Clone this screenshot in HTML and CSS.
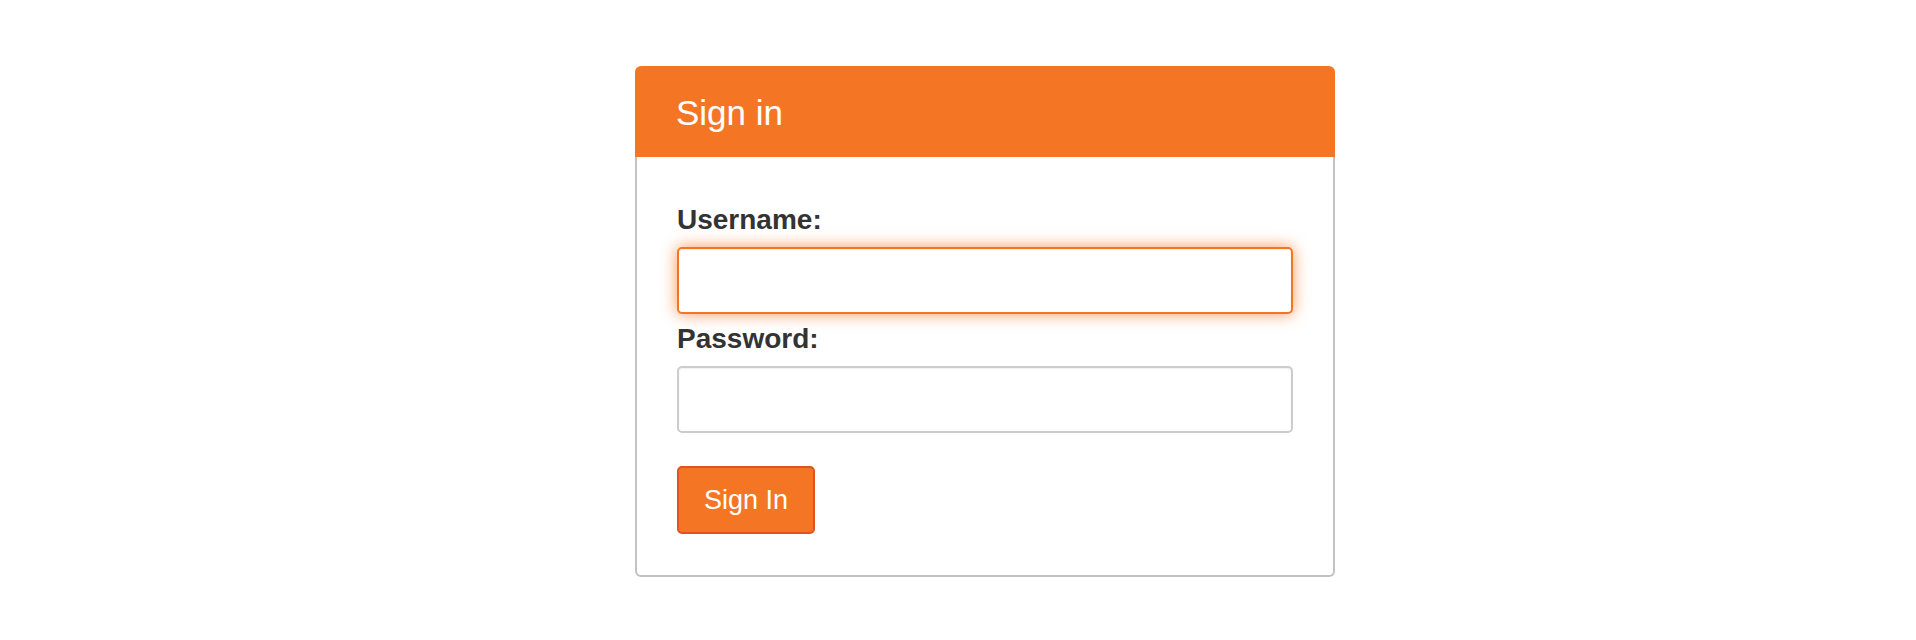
FILE: index.html
```html
<!DOCTYPE html>
<html>
<head>
<meta charset="utf-8">
<title>Sign in</title>
<link rel="stylesheet" href="styles.css">
</head>
<body>
<div class="page">
  <div class="card">
    <div class="card-header">Sign in</div>
    <form class="card-body">
      <div class="field">
        <label class="label" for="u">Username:</label>
        <input class="input focused" id="u" type="text">
      </div>
      <div class="field">
        <label class="label" for="p">Password:</label>
        <input class="input" id="p" type="password">
      </div>
      <button class="btn" type="button">Sign In</button>
    </form>
  </div>
</div>
</body>
</html>
```

FILE: styles.css
```css
* { box-sizing: border-box; }
html, body {
  margin: 0;
  padding: 0;
  background: #ffffff;
  font-family: "Liberation Sans", Arial, Helvetica, sans-serif;
}
.page {
  padding-top: 66px;
  padding-left: 635px;
}
.card {
  width: 700px;
}
.card-header {
  background: #f47624;
  color: #ffffff;
  font-size: 35px;
  line-height: 40px;
  padding: 27px 41px 24px;
  border-radius: 6px 6px 0 0;
}
.card-body {
  margin: 0;
  border: 2px solid #c2c2c2;
  border-top: none;
  border-radius: 0 0 6px 6px;
  padding: 43px 40px 41px;
}
.field {
  display: flex;
  flex-direction: column;
  margin-bottom: 5px;
}
.label {
  font-size: 28px;
  font-weight: bold;
  color: #333333;
  line-height: 39px;
  margin-bottom: 8px;
}
.input {
  display: block;
  width: 616px;
  height: 67px;
  border: 2px solid #cccccc;
  border-radius: 5px;
  background: #ffffff;
  box-shadow: inset 0 1px 2px rgba(0,0,0,0.06);
  outline: none;
  font-size: 24px;
  padding: 0 16px;
  margin: 0;
}
.input.focused {
  border-color: #f47624;
  box-shadow: inset 0 1px 2px rgba(0,0,0,0.06), 0 0 16px rgba(244,118,36,0.75);
}
.btn {
  display: block;
  margin-top: 33px;
  width: 138px;
  height: 68px;
  background: #f47624;
  border: 2px solid #e2521f;
  border-radius: 5px;
  color: #ffffff;
  font-family: "Liberation Sans", Arial, Helvetica, sans-serif;
  font-size: 27px;
  padding: 0;
  cursor: pointer;
}
```
